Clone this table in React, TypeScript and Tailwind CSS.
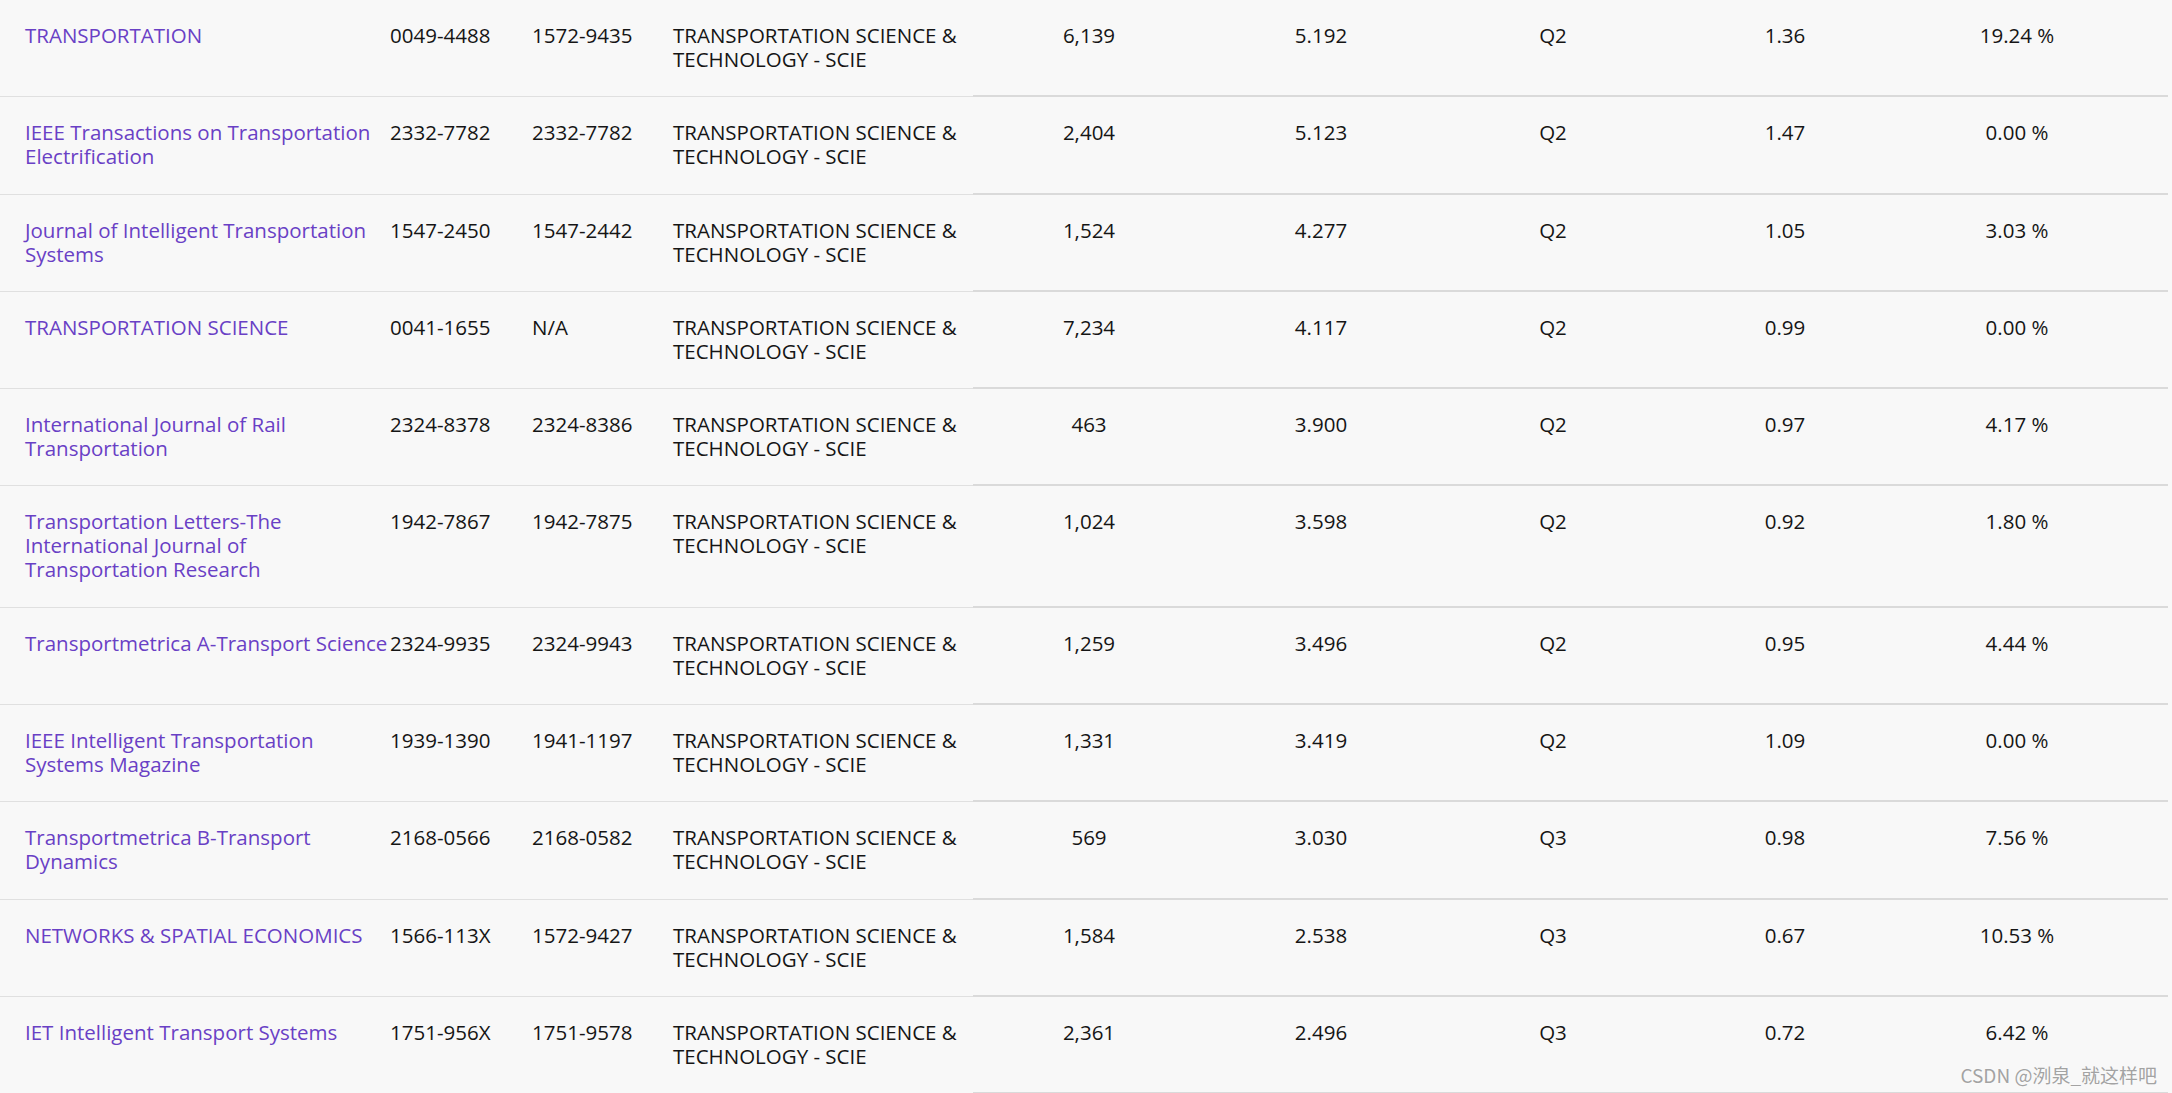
const rows = [
  { title: ["TRANSPORTATION"], issn: "0049-4488", eissn: "1572-9435", cites: "6,139", jif: "5.192", q: "Q2", eigen: "1.36", oa: "19.24 %" },
  { title: ["IEEE Transactions on Transportation", "Electrification"], issn: "2332-7782", eissn: "2332-7782", cites: "2,404", jif: "5.123", q: "Q2", eigen: "1.47", oa: "0.00 %" },
  { title: ["Journal of Intelligent Transportation", "Systems"], issn: "1547-2450", eissn: "1547-2442", cites: "1,524", jif: "4.277", q: "Q2", eigen: "1.05", oa: "3.03 %" },
  { title: ["TRANSPORTATION SCIENCE"], issn: "0041-1655", eissn: "N/A", cites: "7,234", jif: "4.117", q: "Q2", eigen: "0.99", oa: "0.00 %" },
  { title: ["International Journal of Rail", "Transportation"], issn: "2324-8378", eissn: "2324-8386", cites: "463", jif: "3.900", q: "Q2", eigen: "0.97", oa: "4.17 %" },
  { title: ["Transportation Letters-The", "International Journal of", "Transportation Research"], issn: "1942-7867", eissn: "1942-7875", cites: "1,024", jif: "3.598", q: "Q2", eigen: "0.92", oa: "1.80 %" },
  { title: ["Transportmetrica A-Transport Science"], issn: "2324-9935", eissn: "2324-9943", cites: "1,259", jif: "3.496", q: "Q2", eigen: "0.95", oa: "4.44 %" },
  { title: ["IEEE Intelligent Transportation", "Systems Magazine"], issn: "1939-1390", eissn: "1941-1197", cites: "1,331", jif: "3.419", q: "Q2", eigen: "1.09", oa: "0.00 %" },
  { title: ["Transportmetrica B-Transport", "Dynamics"], issn: "2168-0566", eissn: "2168-0582", cites: "569", jif: "3.030", q: "Q3", eigen: "0.98", oa: "7.56 %" },
  { title: ["NETWORKS & SPATIAL ECONOMICS"], issn: "1566-113X", eissn: "1572-9427", cites: "1,584", jif: "2.538", q: "Q3", eigen: "0.67", oa: "10.53 %" },
  { title: ["IET Intelligent Transport Systems"], issn: "1751-956X", eissn: "1751-9578", cites: "2,361", jif: "2.496", q: "Q3", eigen: "0.72", oa: "6.42 %" },
];

export default function App() {
  return (
    <div
      className="relative min-h-[1093px] w-full overflow-hidden bg-[#f8f8f8] text-[20.5px] leading-[24px] text-[#151515]"
      style={{ fontFamily: '"Open Sans", "Noto Sans", sans-serif' }}
    >
      <div className="flex w-[2168px] flex-col">
        {rows.map((r) => (
          <div key={r.issn} className="flex">
            {/* fixed columns */}
            <div className="flex w-[973px] shrink-0 border-b border-[#e0e0e0] pt-[23px] pb-[25.3px]">
              <div className="w-[390px] shrink-0 whitespace-nowrap pl-[25px] text-[#6940c5]">
                {r.title.map((t) => (
                  <div key={t}>{t}</div>
                ))}
              </div>
              <div className="w-[142px] shrink-0">{r.issn}</div>
              <div className="w-[141px] shrink-0">{r.eissn}</div>
              <div className="w-[300px] shrink-0 whitespace-nowrap">
                <div>TRANSPORTATION SCIENCE &amp;</div>
                <div>TECHNOLOGY - SCIE</div>
              </div>
            </div>
            {/* scrolling columns */}
            <div className="flex flex-1 border-b-2 border-[#dadada] pt-[23px] pb-[24.3px]">
              <div className="w-[232px] text-center">{r.cites}</div>
              <div className="w-[232px] text-center">{r.jif}</div>
              <div className="w-[232px] text-center">{r.q}</div>
              <div className="w-[232px] text-center">{r.eigen}</div>
              <div className="w-[232px] text-center">{r.oa}</div>
            </div>
          </div>
        ))}
      </div>
      <div
        className="absolute right-[15px] bottom-[8px] text-[19px] leading-[22px] text-[#a3a3a3] [text-shadow:0_0_2px_#ffffff]"
        style={{ fontFamily: '"Noto Sans CJK SC", "Noto Sans", sans-serif' }}
      >
        CSDN @洌泉_就这样吧
      </div>
    </div>
  );
}
